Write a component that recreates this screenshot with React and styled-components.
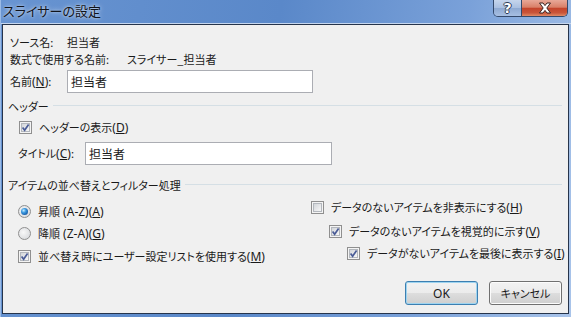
import React from 'react';
import styled, { createGlobalStyle } from 'styled-components';

const GlobalStyle = createGlobalStyle`
  html, body {
    margin: 0;
    padding: 0;
    background: #f0f0f0;
  }
  body {
    font-family: "Noto Sans CJK JP", "Noto Sans", sans-serif;
    font-size: 11px;
    color: #1a1a1a;
  }
`;

const Window = styled.div`
  width: 571px;
  height: 317px;
  display: flex;
  flex-direction: column;
  box-sizing: border-box;
  border-left: 1px solid #9bbbe6;
  background: linear-gradient(100deg, #6894d1 0%, #5a88c9 45%, #7aa1d9 75%, #9ab9e4 92%, #a9c4ea 100%);
  overflow: hidden;
`;

const TitleBar = styled.div`
  height: 24px;
  flex: none;
  display: flex;
  align-items: flex-start;
  box-shadow: inset 0 -1px 0 #c6d7ef;
`;

const Caption = styled.div`
  flex: 1;
  padding: 1px 0 0 2px;
  font-size: 13px;
  line-height: 20px;
  font-feature-settings: "palt";
  color: #10141c;
  text-shadow: 0 0 5px rgba(255, 255, 255, 0.7), 0 0 2px rgba(255, 255, 255, 0.5);
`;

const CaptionButtons = styled.div`
  display: flex;
  margin-right: 3px;
  border: 1px solid #34496b;
  border-top: none;
  border-radius: 0 0 5px 5px;
  overflow: hidden;
  height: 16px;
`;

const HelpButton = styled.div`
  width: 27px;
  display: flex;
  align-items: center;
  justify-content: center;
  background: linear-gradient(#c5d5ec 0%, #a9bfe0 50%, #8ea9d2 51%, #a7bfe2 100%);
  border-right: 1px solid #34496b;
  color: #fff;
  font-family: "DejaVu Sans", sans-serif;
  font-weight: bold;
  font-size: 14px;
  line-height: 16px;
  text-shadow: -1px 0 #2d3c55, 1px 0 #2d3c55, 0 -1px #2d3c55, 0 1px #2d3c55;
`;

const CloseButton = styled.div`
  width: 45px;
  display: flex;
  align-items: center;
  justify-content: center;
  background: linear-gradient(#e8a898 0%, #d98068 45%, #c4442b 52%, #c9553a 80%, #e08a66 100%);
`;

const Client = styled.div`
  flex: 1;
  margin: 0 2px 3px 1px;
  border: 1px solid #26344b;
  background: #f0f0f0;
  display: flex;
  flex-direction: column;
  padding: 8px 6px 8px 5px;
  font-feature-settings: "palt";
`;

const InfoRow = styled.div`
  height: 17px;
  display: flex;
  align-items: center;
  padding-left: 2px;
  margin-top: ${(p) => p.$top || 0}px;
`;

const Label = styled.span`
  width: ${(p) => (p.$width ? `${p.$width}px` : 'auto')};
  flex: none;
  white-space: nowrap;
`;

const Text = styled.span`
  white-space: nowrap;
`;

// latin runs: Meiryo UI draws them wider than the CJK font's own latin
const Latin = styled.span`
  font-family: "Noto Sans", "Open Sans", sans-serif;
  font-size: 12px;
  white-space: pre;
`;

const FieldRow = styled.div`
  height: 23px;
  display: flex;
  align-items: center;
  padding-left: ${(p) => p.$indent || 0}px;
  margin-top: ${(p) => p.$top || 0}px;
`;

const TextInput = styled.div`
  width: ${(p) => p.$width}px;
  height: 23px;
  box-sizing: border-box;
  border: 1px solid #abadb3;
  background: #fff;
  display: flex;
  align-items: center;
  padding-left: 3px;
  font-size: 12px;
`;

const GroupHeader = styled.div`
  height: 17px;
  display: flex;
  align-items: center;
  gap: 4px;
  margin-top: ${(p) => p.$top || 0}px;

  &::after {
    content: "";
    flex: 1;
    border-top: 1px solid #d5dfe5;
  }
`;

const Option = styled.div`
  height: 17px;
  display: flex;
  align-items: center;
  gap: 7px;
  margin-top: ${(p) => p.$top || 0}px;
  padding-left: ${(p) => p.$indent || 0}px;
`;

const Box = styled.span`
  position: relative;
  width: 13px;
  height: 13px;
  box-sizing: border-box;
  flex: none;
  border: 1px solid #8f8f8f;
  background: #f4f4f4;

  &::before {
    content: "";
    position: absolute;
    inset: 1px;
    border: 1px solid #b3b7bd;
    background: linear-gradient(135deg, #d3d6da, #f7f7f7);
  }

  svg {
    position: absolute;
    left: 0;
    top: 0;
  }
`;

const Radio = styled.span`
  position: relative;
  width: 13px;
  height: 13px;
  box-sizing: border-box;
  flex: none;
  border-radius: 50%;
  border: 1px solid #8f8f8f;
  background: radial-gradient(circle at 40% 40%, #f8f8f8, #d2d4d8);

  &::after {
    content: "";
    display: ${(p) => (p.$on ? 'block' : 'none')};
    position: absolute;
    left: 2px;
    top: 2px;
    width: 7px;
    height: 7px;
    border-radius: 50%;
    background: radial-gradient(circle at 38% 35%, #c6ecff 0%, #3d9ae0 35%, #155ba8 75%, #0e3f7c 100%);
  }
`;

const Columns = styled.div`
  display: grid;
  grid-template-columns: 293px 1fr;
  padding-left: 10px;
`;

const Column = styled.div`
  display: flex;
  flex-direction: column;
`;

const Buttons = styled.div`
  margin-top: auto;
  display: flex;
  justify-content: flex-end;
  gap: 11px;
`;

const Button = styled.div`
  width: 73px;
  height: 24px;
  box-sizing: border-box;
  border: 1px solid ${(p) => (p.$default ? '#3c7fb1' : '#707070')};
  border-radius: 3px;
  display: flex;
  align-items: center;
  justify-content: center;
  background: linear-gradient(#f2f2f2 0%, #ebebeb 50%, #dddddd 51%, #cfcfcf 100%);
  box-shadow: inset 0 0 0 1px ${(p) => (p.$default ? '#9ed4f0' : '#fcfcfc')};
`;

const Check = () => (
  <svg width="11" height="11" viewBox="0 0 11 11">
    <path d="M2.6 5.6 L4.6 8.2 L8.6 2.4" fill="none" stroke="#4a5c97" strokeWidth="1.7" />
  </svg>
);

const CheckBox = ({ on }) => <Box>{on && <Check />}</Box>;

const Key = ({ k }) => (
  <Latin>
    (<u>{k}</u>)
  </Latin>
);

const CloseIcon = () => (
  <svg width="16" height="12" viewBox="0 0 16 12">
    <path
      d="M2.5 1 H6 L8 3.6 L10 1 H13.5 L9.8 6 L13.5 11 H10 L8 8.4 L6 11 H2.5 L6.2 6 Z"
      fill="#ffffff"
      stroke="#3a2320"
      strokeWidth="1"
      strokeLinejoin="round"
    />
  </svg>
);

const App = () => (
  <>
    <GlobalStyle />
    <Window>
      <TitleBar>
        <Caption>スライサーの設定</Caption>
        <CaptionButtons>
          <HelpButton>?</HelpButton>
          <CloseButton>
            <CloseIcon />
          </CloseButton>
        </CaptionButtons>
      </TitleBar>
      <Client>
        <InfoRow>
          <Label $width={57}>ソース名:</Label>
          <Text>担当者</Text>
        </InfoRow>
        <InfoRow>
          <Label $width={117}>数式で使用する名前:</Label>
          <Text>スライサー_担当者</Text>
        </InfoRow>
        <FieldRow $top={3} $indent={2}>
          <Label $width={57}>名前<Key k="N" />:</Label>
          <TextInput $width={246}>担当者</TextInput>
        </FieldRow>

        <GroupHeader $top={4}>ヘッダー</GroupHeader>
        <Option $top={5} $indent={11}>
          <CheckBox on />
          <Text>ヘッダーの表示<Key k="D" /></Text>
        </Option>
        <FieldRow $top={6} $indent={10}>
          <Label $width={67}>タイトル<Key k="C" />:</Label>
          <TextInput $width={247}>担当者</TextInput>
        </FieldRow>

        <GroupHeader $top={11}>アイテムの並べ替えとフィルター処理</GroupHeader>
        <Columns>
          <Column>
            <Option $top={10}>
              <Radio $on />
              <Text>昇順<Latin> (A-Z)</Latin><Key k="A" /></Text>
            </Option>
            <Option $top={5}>
              <Radio />
              <Text>降順<Latin> (Z-A)</Latin><Key k="G" /></Text>
            </Option>
            <Option $top={6}>
              <CheckBox on />
              <Text>並べ替え時にユーザー設定リストを使用する<Key k="M" /></Text>
            </Option>
          </Column>
          <Column>
            <Option $top={6}>
              <CheckBox />
              <Text>データのないアイテムを非表示にする<Key k="H" /></Text>
            </Option>
            <Option $top={7} $indent={18}>
              <CheckBox on />
              <Text>データのないアイテムを視覚的に示す<Key k="V" /></Text>
            </Option>
            <Option $top={5} $indent={36}>
              <CheckBox on />
              <Text>データがないアイテムを最後に表示する<Key k="I" /></Text>
            </Option>
          </Column>
        </Columns>

        <Buttons>
          <Button $default><Latin>OK</Latin></Button>
          <Button>キャンセル</Button>
        </Buttons>
      </Client>
    </Window>
  </>
);

export default App;
